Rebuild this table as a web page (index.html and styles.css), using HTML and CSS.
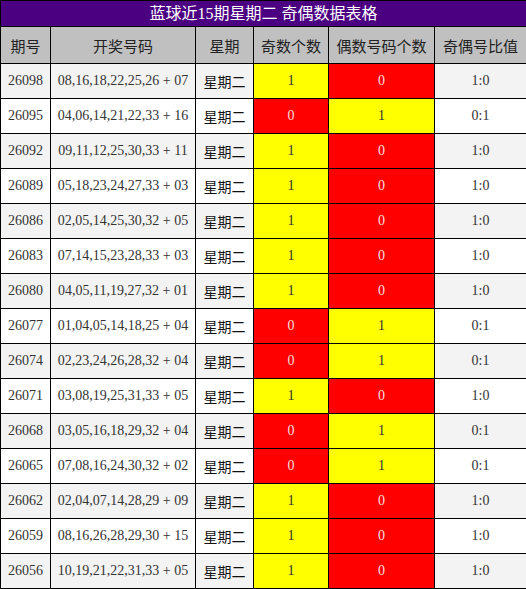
FILE: index.html
```html
<!DOCTYPE html>
<html lang="zh">
<head>
<meta charset="utf-8">
<link rel="stylesheet" href="styles.css">
</head>
<body>
<table class="tbl">
  <colgroup>
    <col class="c1"><col class="c2"><col class="c3"><col class="c4"><col class="c5"><col class="c6">
  </colgroup>
  <thead>
    <tr><th colspan="6" class="title">蓝球近15期星期二 奇偶数据表格</th></tr>
    <tr class="head"><th>期号</th><th>开奖号码</th><th>星期</th><th>奇数个数</th><th>偶数号码个数</th><th>奇偶号比值</th></tr>
  </thead>
  <tbody>
    <tr><td>26098</td><td>08,16,18,22,25,26 + 07</td><td class="cn">星期二</td><td class="y">1</td><td class="r">0</td><td>1:0</td></tr>
    <tr><td>26095</td><td>04,06,14,21,22,33 + 16</td><td class="cn">星期二</td><td class="r">0</td><td class="y">1</td><td>0:1</td></tr>
    <tr><td>26092</td><td>09,11,12,25,30,33 + 11</td><td class="cn">星期二</td><td class="y">1</td><td class="r">0</td><td>1:0</td></tr>
    <tr><td>26089</td><td>05,18,23,24,27,33 + 03</td><td class="cn">星期二</td><td class="y">1</td><td class="r">0</td><td>1:0</td></tr>
    <tr><td>26086</td><td>02,05,14,25,30,32 + 05</td><td class="cn">星期二</td><td class="y">1</td><td class="r">0</td><td>1:0</td></tr>
    <tr><td>26083</td><td>07,14,15,23,28,33 + 03</td><td class="cn">星期二</td><td class="y">1</td><td class="r">0</td><td>1:0</td></tr>
    <tr><td>26080</td><td>04,05,11,19,27,32 + 01</td><td class="cn">星期二</td><td class="y">1</td><td class="r">0</td><td>1:0</td></tr>
    <tr><td>26077</td><td>01,04,05,14,18,25 + 04</td><td class="cn">星期二</td><td class="r">0</td><td class="y">1</td><td>0:1</td></tr>
    <tr><td>26074</td><td>02,23,24,26,28,32 + 04</td><td class="cn">星期二</td><td class="r">0</td><td class="y">1</td><td>0:1</td></tr>
    <tr><td>26071</td><td>03,08,19,25,31,33 + 05</td><td class="cn">星期二</td><td class="y">1</td><td class="r">0</td><td>1:0</td></tr>
    <tr><td>26068</td><td>03,05,16,18,29,32 + 04</td><td class="cn">星期二</td><td class="r">0</td><td class="y">1</td><td>0:1</td></tr>
    <tr><td>26065</td><td>07,08,16,24,30,32 + 02</td><td class="cn">星期二</td><td class="r">0</td><td class="y">1</td><td>0:1</td></tr>
    <tr><td>26062</td><td>02,04,07,14,28,29 + 09</td><td class="cn">星期二</td><td class="y">1</td><td class="r">0</td><td>1:0</td></tr>
    <tr><td>26059</td><td>08,16,26,28,29,30 + 15</td><td class="cn">星期二</td><td class="y">1</td><td class="r">0</td><td>1:0</td></tr>
    <tr><td>26056</td><td>10,19,21,22,31,33 + 05</td><td class="cn">星期二</td><td class="y">1</td><td class="r">0</td><td>1:0</td></tr>
  </tbody>
</table>
</body>
</html>
```
FILE: styles.css
```css
html, body {
  margin: 0;
  padding: 0;
  background: #fff;
}
.tbl {
  border-collapse: collapse;
  table-layout: fixed;
  width: 526px;
  font-family: "Liberation Serif", "Noto Sans CJK SC", serif;
  color: #333;
}
.c1 { width: 50px; }
.c2 { width: 145px; }
.c3 { width: 58px; }
.c4 { width: 75px; }
.c5 { width: 106px; }
.c6 { width: 92px; }
.tbl th, .tbl td {
  border: 1px solid #000;
  padding: 0;
  text-align: center;
  font-weight: normal;
}
.title {
  background: #4b0082;
  color: #fff;
  font-size: 16px;
  height: 25px;
  line-height: 25px;
}
.head th {
  background: #c0c0c0;
  font-family: "Noto Sans CJK SC", sans-serif;
  font-size: 15px;
  height: 36px;
  color: #222;
}
.tbl td {
  font-size: 14px;
  height: 34px;
}
.tbl tbody tr:nth-child(odd) td { background: #f3f3f3; }
.tbl tbody tr:nth-child(even) td { background: #fff; }
.tbl td.cn {
  font-family: "Noto Sans CJK SC", sans-serif;
  color: #111;
}
.tbl tbody tr td.y { background: #ffff00; color: #333; }
.tbl tbody tr td.r { background: #ff0000; color: #ffdede; }
```
